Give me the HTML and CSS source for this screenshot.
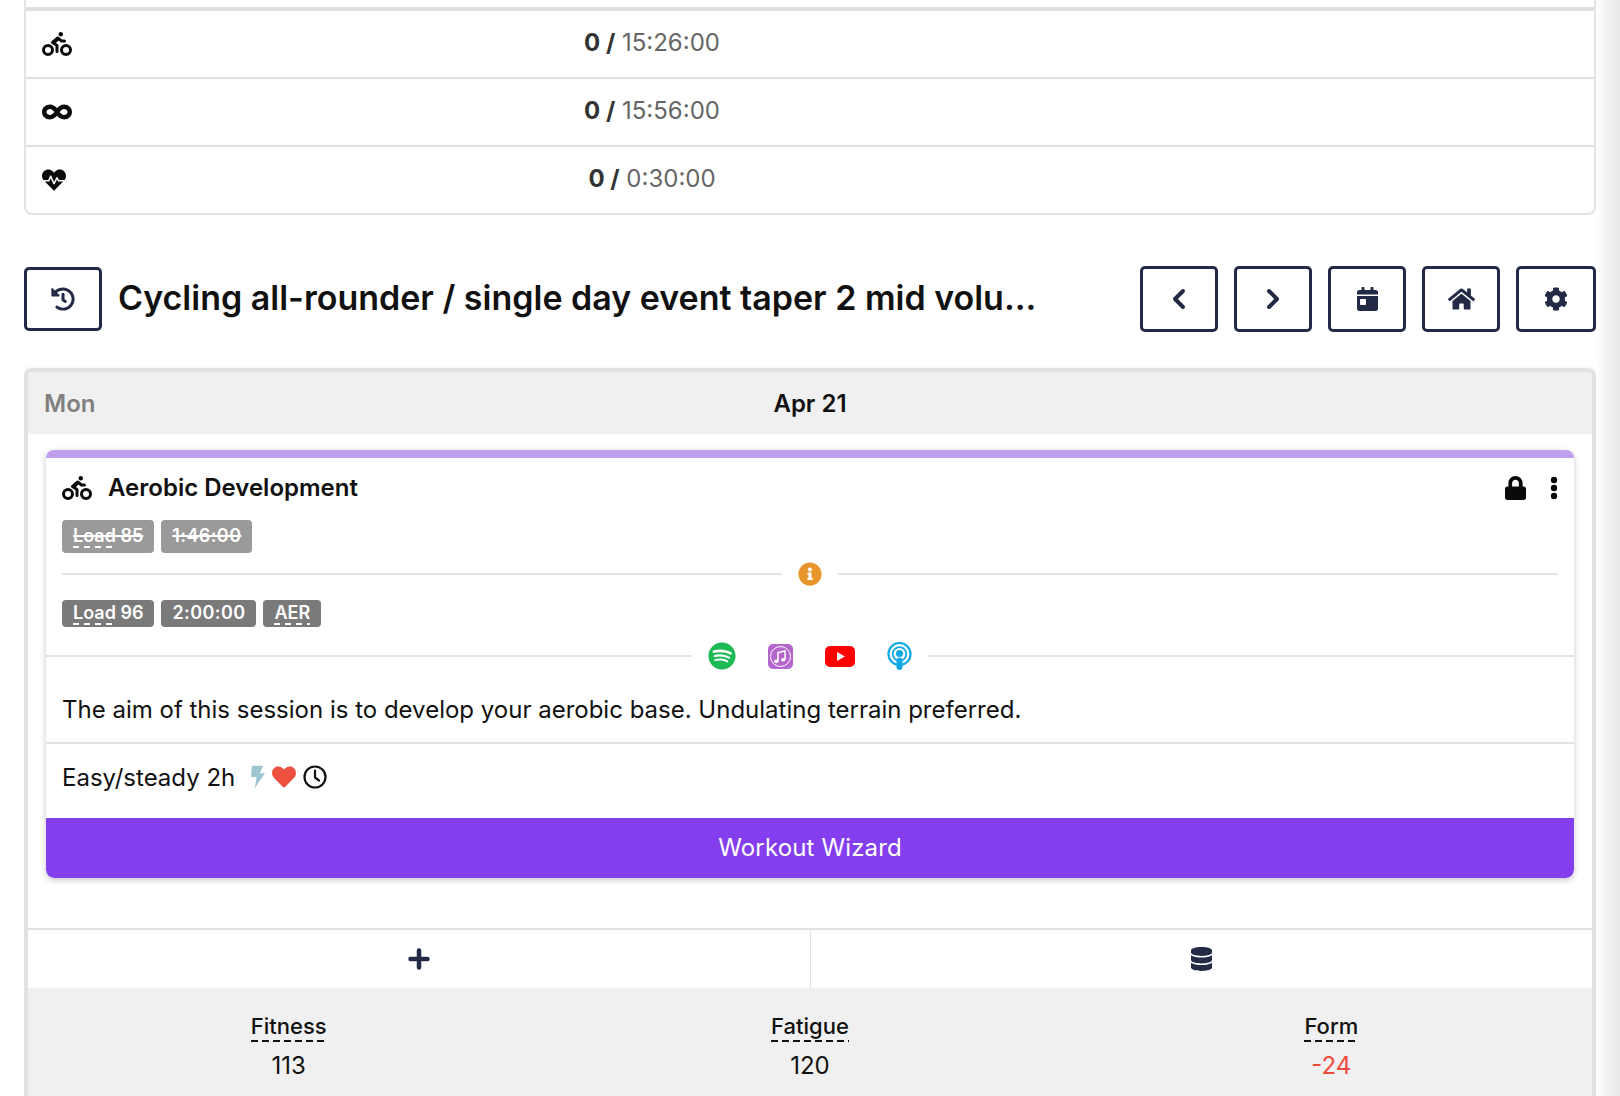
FILE: index.html
```html
<!DOCTYPE html>
<html lang="en">
<head>
<meta charset="utf-8">
<title>Training plan</title>
<link rel="stylesheet" href="styles.css">
</head>
<body>
<div class="page">
<main class="content">
  <section class="summary">
    <div class="summary-row">
      <svg class="ic ic-black" viewBox="0 0 640 512" width="30" height="24"><path d="M400 96a48 48 0 1 0-48-48 48 48 0 0 0 48 48zm-4 121a31.900 31.900 0 0 0 20 7h64a32 32 0 0 0 0-64h-52.780L356 103a31.940 31.940 0 0 0-40.810.680l-112 96a32 32 0 0 0 3.080 50.920L288 305.120V416a32 32 0 0 0 64 0V288a32 32 0 0 0-14.250-26.620l-41.360-27.570 58.250-49.920zm116 39a128 128 0 1 0 128 128 128 128 0 0 0-128-128zm0 192a64 64 0 1 1 64-64 64 64 0 0 1-64 64zM128 256a128 128 0 1 0 128 128 128 128 0 0 0-128-128zm0 192a64 64 0 1 1 64-64 64 64 0 0 1-64 64z"/></svg>
      <div class="summary-val"><b>0 /</b> <span>15:26:00</span></div>
    </div>
    <div class="summary-row">
      <svg class="ic ic-black" viewBox="0 0 640 512" width="30" height="24"><path d="M471.100 96C405 96 353.300 137.300 320 174.600 286.700 137.300 235 96 168.900 96 75.800 96 0 167.800 0 256s75.800 160 168.900 160c66.100 0 117.800-41.300 151.100-78.600 33.300 37.300 85 78.600 151.100 78.600 93.100 0 168.900-71.800 168.900-160S564.200 96 471.100 96zM168.900 320c-40.200 0-72.900-28.700-72.900-64s32.700-64 72.900-64c38.200 0 73.400 36.100 94 64-20.400 27.600-55.900 64-94 64zm302.200 0c-38.200 0-73.400-36.100-94-64 20.400-27.600 55.900-64 94-64 40.200 0 72.900 28.700 72.900 64s-32.700 64-72.900 64z"/></svg>
      <div class="summary-val"><b>0 /</b> <span>15:56:00</span></div>
    </div>
    <div class="summary-row">
      <svg class="ic ic-black" viewBox="0 0 512 512" width="24" height="24"><path d="M320.200 243.800l-49.700 99.400c-6 12.100-23.400 11.700-28.900-.6l-56.900-126.300-30 71.700H60.600l182.500 186.500c7.100 7.300 18.600 7.300 25.700 0L451.400 288H342.300l-22.100-44.200zM473.700 73.900l-2.400-2.500c-51.500-52.600-135.800-52.600-187.400 0L256 100l-27.900-28.500c-51.500-52.700-135.900-52.700-187.400 0l-2.400 2.400C-10.400 123.700-12.500 203 31 256h102.400l35.900-86.200c5.400-12.900 23.600-13.200 29.400-.4l58.200 129.300 49-97.900c5.900-11.800 22.700-11.800 28.600 0l27.600 55.200H481c43.500-53 41.400-132.300-7.300-182.100z"/></svg>
      <div class="summary-val"><b>0 /</b> <span>0:30:00</span></div>
    </div>
  </section>

  <header class="plan-bar">
    <button class="btn btn-history" type="button" aria-label="History">
      <svg class="ic" viewBox="0 0 512 512" width="24" height="24"><path d="M504 255.531c.253 136.640-111.180 248.372-247.820 248.468-59.015.042-113.223-20.530-155.822-54.911-11.077-8.940-11.905-25.541-1.839-35.607l11.267-11.267c8.609-8.609 22.353-9.551 31.891-1.984C173.062 425.135 212.781 440 256 440c101.705 0 184-82.311 184-184 0-101.705-82.311-184-184-184-48.814 0-93.149 18.969-126.068 49.932l50.754 50.754c10.080 10.080 2.941 27.314-11.313 27.314H24c-8.837 0-16-7.163-16-16V38.627c0-14.254 17.234-21.393 27.314-11.314l49.372 49.372C129.209 34.136 189.552 8 256 8c136.810 0 247.747 110.780 248 247.531zm-180.912 78.784l9.823-12.630c8.138-10.463 6.253-25.542-4.210-33.679L288 256.349V152c0-13.255-10.745-24-24-24h-16c-13.255 0-24 10.745-24 24v135.651l65.409 50.874c10.463 8.137 25.541 6.253 33.679-4.210z"/></svg>
    </button>
    <h1 class="plan-title">Cycling all-rounder / single day event taper 2 mid volu...</h1>
    <div class="plan-actions">
      <button class="btn" type="button" aria-label="Previous"><svg class="ic-line" viewBox="0 0 24 24" width="24" height="24"><polyline points="16,4 8,12 16,20"/></svg></button>
      <button class="btn" type="button" aria-label="Next"><svg class="ic-line" viewBox="0 0 24 24" width="24" height="24"><polyline points="8,4 16,12 8,20"/></svg></button>
      <button class="btn" type="button" aria-label="Calendar"><svg class="ic" viewBox="0 0 448 512" width="21" height="24"><path d="M0 464c0 26.500 21.500 48 48 48h352c26.500 0 48-21.500 48-48V192H0v272zm64-192c0-8.800 7.200-16 16-16h96c8.800 0 16 7.200 16 16v96c0 8.800-7.200 16-16 16H80c-8.800 0-16-7.200-16-16v-96zM400 64h-48V16c0-8.800-7.200-16-16-16h-32c-8.800 0-16 7.200-16 16v48H160V16c0-8.800-7.200-16-16-16h-32c-8.800 0-16 7.200-16 16v48H48C21.500 64 0 85.500 0 112v48h448v-48c0-26.500-21.500-48-48-48z"/></svg></button>
      <button class="btn" type="button" aria-label="Home"><svg class="ic" viewBox="0 0 576 512" width="27" height="24"><path d="M280.370 148.260L96 300.110V464a16 16 0 0 0 16 16l112.060-.29a16 16 0 0 0 15.920-16V368a16 16 0 0 1 16-16h64a16 16 0 0 1 16 16v95.640a16 16 0 0 0 16 16.050L464 480a16 16 0 0 0 16-16V300L295.670 148.260a12.190 12.190 0 0 0-15.300 0zM571.600 251.470L488 182.560V44.050a12 12 0 0 0-12-12h-56a12 12 0 0 0-12 12v72.610L318.470 43a48 48 0 0 0-61 0L4.340 251.470a12 12 0 0 0-1.600 16.900l25.500 31A12 12 0 0 0 45.150 301l235.220-193.740a12.190 12.190 0 0 1 15.300 0L530.900 301a12 12 0 0 0 16.900-1.600l25.500-31a12 12 0 0 0-1.700-16.930z"/></svg></button>
      <button class="btn" type="button" aria-label="Settings"><svg class="ic" viewBox="0 0 512 512" width="24" height="24"><path d="M487.400 315.700l-42.600-24.600c4.300-23.200 4.300-47 0-70.200l42.600-24.600c4.900-2.800 7.100-8.600 5.500-14-11.100-35.600-30-67.800-54.700-94.600-3.800-4.100-10-5.100-14.800-2.300L380.800 110c-17.900-15.400-38.500-27.300-60.800-35.100V25.800c0-5.600-3.900-10.500-9.400-11.700-36.700-8.200-74.300-7.800-109.200 0-5.500 1.200-9.400 6.100-9.400 11.700V75c-22.200 7.900-42.800 19.800-60.800 35.100L88.700 85.500c-4.900-2.800-11-1.900-14.800 2.300-24.700 26.700-43.600 58.900-54.700 94.600-1.700 5.400.6 11.200 5.500 14L67.300 221c-4.300 23.200-4.300 47 0 70.200l-42.600 24.600c-4.900 2.800-7.100 8.600-5.500 14 11.100 35.600 30 67.800 54.700 94.600 3.800 4.100 10 5.100 14.800 2.300l42.600-24.600c17.900 15.400 38.500 27.300 60.800 35.100v49.200c0 5.600 3.900 10.500 9.400 11.700 36.700 8.200 74.300 7.800 109.200 0 5.500-1.200 9.400-6.100 9.400-11.700v-49.200c22.200-7.900 42.800-19.800 60.800-35.100l42.600 24.600c4.900 2.800 11 1.900 14.800-2.300 24.700-26.700 43.600-58.900 54.700-94.600 1.500-5.500-.7-11.300-5.600-14.100zM256 336c-44.100 0-80-35.900-80-80s35.900-80 80-80 80 35.900 80 80-35.900 80-80 80z"/></svg></button>
    </div>
  </header>

  <section class="day">
    <div class="day-head">
      <span class="day-name">Mon</span>
      <span class="day-date">Apr 21</span>
    </div>
    <div class="day-body">
      <article class="workout">
        <div class="workout-head">
          <svg class="ic ic-black" viewBox="0 0 640 512" width="30" height="24"><path d="M400 96a48 48 0 1 0-48-48 48 48 0 0 0 48 48zm-4 121a31.900 31.900 0 0 0 20 7h64a32 32 0 0 0 0-64h-52.780L356 103a31.940 31.940 0 0 0-40.810.680l-112 96a32 32 0 0 0 3.080 50.920L288 305.120V416a32 32 0 0 0 64 0V288a32 32 0 0 0-14.250-26.620l-41.360-27.570 58.250-49.920zm116 39a128 128 0 1 0 128 128 128 128 0 0 0-128-128zm0 192a64 64 0 1 1 64-64 64 64 0 0 1-64 64zM128 256a128 128 0 1 0 128 128 128 128 0 0 0-128-128zm0 192a64 64 0 1 1 64-64 64 64 0 0 1-64 64z"/></svg>
          <h2 class="workout-title">Aerobic Development</h2>
          <svg class="ic ic-black lock" viewBox="0 0 448 512" width="21" height="24"><path d="M400 224h-24v-72C376 68.200 307.800 0 224 0S72 68.200 72 152v72H48c-26.500 0-48 21.500-48 48v192c0 26.500 21.500 48 48 48h352c26.500 0 48-21.500 48-48V272c0-26.500-21.500-48-48-48zm-104 0H152v-72c0-39.700 32.300-72 72-72s72 32.300 72 72v72z"/></svg>
          <svg class="ic ic-black kebab" viewBox="0 0 8 24" width="8" height="24"><circle cx="4" cy="4" r="3.200"/><circle cx="4" cy="12" r="3.200"/><circle cx="4" cy="20" r="3.200"/></svg>
        </div>
        <div class="badges badges-old">
          <span class="badge"><s><span class="dashed">Load</span> 85</s></span>
          <span class="badge badge-time"><s>1:46:00</s></span>
        </div>
        <div class="divider divider-inset">
          <svg class="info" viewBox="0 0 512 512" width="24" height="24"><path d="M256 8C119 8 8 119.100 8 256c0 137 111 248 248 248s248-111 248-248C504 119.100 393 8 256 8zm0 110c23.200 0 42 18.800 42 42s-18.800 42-42 42-42-18.800-42-42 18.800-42 42-42zm56 254c0 6.600-5.400 12-12 12h-88c-6.600 0-12-5.400-12-12v-24c0-6.600 5.400-12 12-12h12v-64h-12c-6.600 0-12-5.400-12-12v-24c0-6.600 5.400-12 12-12h64c6.600 0 12 5.400 12 12v100h12c6.600 0 12 5.400 12 12v24z"/></svg>
        </div>
        <div class="badges badges-new">
          <span class="badge"><span class="dashed">Load</span> 96</span>
          <span class="badge badge-time">2:00:00</span>
          <span class="badge"><span class="dashed">AER</span></span>
        </div>
        <div class="divider media">
          <svg class="m-spotify" viewBox="0 0 496 512" width="28" height="28"><path d="M248 8C111.100 8 0 119.100 0 256s111.100 248 248 248 248-111.100 248-248S384.900 8 248 8zm100.700 364.900c-4.200 0-6.800-1.300-10.700-3.600-62.400-37.600-135-39.200-206.700-24.500-3.900 1-9 2.600-11.900 2.600-9.700 0-15.800-7.700-15.800-15.800 0-10.300 6.100-15.200 13.600-16.800 81.900-18.100 165.600-16.500 237 26.200 6.100 3.900 9.700 7.400 9.700 16.500s-7.100 15.400-15.200 15.400zm26.900-65.600c-5.200 0-8.700-2.300-12.300-4.200-62.500-37-155.700-51.900-238.600-29.400-4.800 1.300-7.400 2.600-11.900 2.600-10.700 0-19.400-8.700-19.400-19.400s5.200-17.800 15.500-20.700c27.800-7.800 56.200-13.600 97.800-13.600 64.900 0 127.600 16.100 177 45.500 8.100 4.800 11.300 11 11.300 19.700-.1 10.800-8.500 19.500-19.400 19.500zm31-76.200c-5.200 0-8.400-1.300-12.900-3.900-71.200-42.500-198.500-52.700-280.900-29.700-3.600 1-8.100 2.600-12.900 2.600-13.200 0-23.300-10.300-23.300-23.600 0-13.600 8.400-21.300 17.400-23.900 35.200-10.300 74.600-15.200 117.500-15.200 73 0 149.500 15.200 205.400 47.800 7.800 4.500 12.900 10.700 12.900 22.600 0 13.600-11 23.300-23.200 23.300z"/></svg>
          <svg viewBox="0 0 25 25" width="25" height="25"><rect width="25" height="25" rx="5" fill="#b566cc"/><circle cx="12.500" cy="12.500" r="10" fill="none" stroke="#fff" stroke-width="1"/><path d="M10 17V8.500l7-1.500v8.500" fill="none" stroke="#fff" stroke-width="1.500"/><ellipse cx="8.300" cy="17.200" rx="2.200" ry="1.800" fill="#fff"/><ellipse cx="15.300" cy="15.700" rx="2.200" ry="1.800" fill="#fff"/></svg>
          <svg viewBox="0 0 30 21" width="30" height="21"><rect width="30" height="21" rx="5" fill="#ff0000"/><polygon points="12,6 20,10.500 12,15" fill="#fff"/></svg>
          <svg viewBox="0 0 25 28" width="25" height="28"><g fill="none" stroke="#11a9e3"><circle cx="12.500" cy="12" r="11" stroke-width="2.200"/><circle cx="12.500" cy="12" r="6.800" stroke-width="1.800"/></g><circle cx="12.500" cy="11.500" r="3.600" fill="#11a9e3"/><rect x="9.500" y="15.500" width="6" height="12.500" rx="3" fill="#11a9e3"/></svg>
        </div>
        <p class="workout-desc">The aim of this session is to develop your aerobic base. Undulating terrain preferred.</p>
        <div class="workout-sub">
          <span>Easy/steady 2h</span>
          <span class="sub-icons">
            <svg viewBox="0 0 16 24" width="15" height="24"><polygon points="2,0 14,0 10.500,8 16,8 5,24 7,12 1,12" fill="#9fc6d0"/></svg>
            <svg viewBox="0 0 512 512" width="24" height="24"><path fill="#ee5040" d="M462.300 62.600C407.500 15.900 326 24.300 275.700 76.200L256 96.500l-19.700-20.300C186.100 24.300 104.500 15.900 49.700 62.600c-62.800 53.600-66.100 149.800-9.900 207.900l193.500 199.800c12.500 12.900 32.800 12.900 45.300 0l193.500-199.800c56.300-58.100 53-154.300-9.800-207.900z"/></svg>
            <svg class="clock" viewBox="0 0 24 24" width="24" height="24"><circle cx="12" cy="12" r="10.500"/><polyline points="12,5.500 12,12.500 16,15.500"/></svg>
          </span>
        </div>
        <button class="wizard" type="button">Workout Wizard</button>
      </article>
    </div>
    <div class="day-tools">
      <div class="tool"><svg class="ic-line ic-plus" viewBox="0 0 24 24" width="24" height="24"><path d="M12 3.500v17M3.500 12h17"/></svg></div>
      <div class="tool"><svg class="ic" viewBox="0 0 448 512" width="21" height="24"><path d="M448 73.140v45.720C448 159.100 347.700 192 224 192S0 159.100 0 118.860V73.140C0 32.900 100.300 0 224 0s224 32.900 224 73.140zM448 176v102.900C448 319.100 347.700 352 224 352S0 319.100 0 278.900V176c48.100 33.100 136.200 48.600 224 48.600S399.900 209.100 448 176zm0 160v102.900C448 479.100 347.700 512 224 512S0 479.100 0 438.900V336c48.100 33.100 136.200 48.600 224 48.600S399.900 369.100 448 336z"/></svg></div>
    </div>
    <div class="stats">
      <div class="stat"><span class="stat-label">Fitness</span><span class="stat-val">113</span></div>
      <div class="stat"><span class="stat-label">Fatigue</span><span class="stat-val">120</span></div>
      <div class="stat"><span class="stat-label">Form</span><span class="stat-val stat-neg">-24</span></div>
    </div>
  </section>
</main>
<aside class="edge-shadow"></aside>
</div>
</body>
</html>
```
FILE: styles.css
```css
* { box-sizing: border-box; }
html, body { margin: 0; height: 100%; overflow: hidden; background: #fff; }
body { font-family: Inter, "Liberation Sans", sans-serif; font-size: 24px; color: #111; }
.page { display: flex; height: 1096px; overflow: hidden; }
.content { width: 1596px; padding-left: 24px; flex: none; }
.edge-shadow { flex: 1; background: linear-gradient(90deg, #fff 0%, #f4f4f4 40%, #e6e6e6 100%); }

.ic { fill: #232a45; display: block; }
.ic-black { fill: #0a0a0a; }
.ic-line { fill: none; stroke: #232a45; stroke-width: 4; stroke-linecap: round; stroke-linejoin: round; display: block; }
.ic-plus { stroke-width: 4.500; }

.summary { padding-top: 7px; border: 2px solid #e3e3e3; border-width: 0 2px 2px; border-radius: 0 0 8px 8px; }
.summary-row { display: grid; grid-template-columns: 366px 520px 1fr; align-items: center; height: 68px; border-top: 2px solid #e0e0e0; }
.summary-row:first-child { border-top-width: 4px; height: 70px; }
.summary-row .ic { margin-left: 16px; }
.summary-val { text-align: center; color: #666; grid-column: 2; margin-top: -4px; }
.summary-val b { font-weight: 700; color: #333; }
.summary-val span { font-weight: 400; }

.plan-bar { display: flex; align-items: center; margin-top: 51px; height: 66px; }
.btn { width: 78px; height: 66px; flex: none; display: flex; align-items: center; justify-content: center; background: #fff; border: 3px solid #232a45; border-radius: 5px; padding: 0; }
.btn-history { height: 64px; }
.plan-title { margin: 0 0 2px 16px; font-size: 34px; font-weight: 600; color: #111; flex: 1; white-space: nowrap; line-height: 40px; }
.plan-actions { display: flex; gap: 16px; }
.plan-actions .btn:last-child { width: 80px; }

.day { margin-top: 36px; border: 4px solid #e2e2e2; border-bottom: 0; border-radius: 8px 8px 0 0; box-shadow: 0 -2px 3px rgba(0,0,0,.03); overflow: hidden; }
.day-head { height: 62px; background: #f0f0f0; display: grid; grid-template-columns: 1fr 1fr 1fr; align-items: center; padding: 0 16px; font-weight: 600; }
.day-name { color: #808080; }
.day-date { text-align: center; color: #111; }
.day-body { padding: 16px 18px 50px 18px; }

.workout { border-top: 8px solid #c09fef; border-radius: 8px; box-shadow: 0 2px 6px rgba(0,0,0,.22); display: flex; flex-direction: column; overflow: hidden; }
.workout-head { display: flex; align-items: center; gap: 16px; height: 62px; padding: 0 16px 3px; }
.workout-title { margin: 0; font-size: 24px; font-weight: 600; flex: 1; }
.workout-head .kebab { margin-left: 8px; }

.badges { display: flex; gap: 7px; padding: 0 16px; }
.badge { display: block; background: #7a7a7a; color: #fff; font-size: 18px; font-weight: 600; border-radius: 4px; padding: 0 11px; height: 27px; line-height: 26px; white-space: nowrap; overflow: hidden; }
.badge-time { letter-spacing: .4px; }
.badges-old .badge { background: #9a9a9a; height: 33px; line-height: 32px; }
.badges-old s { text-decoration-thickness: 2px; }
.dashed { padding-bottom: 2px; background: repeating-linear-gradient(90deg, #fff 0 6px, transparent 6px 11px) left bottom / 100% 2px no-repeat; }

.divider { display: flex; align-items: center; justify-content: center; }
.divider::before, .divider::after { content: ""; flex: 1; height: 2px; background: #e3e3e3; }
.divider-inset { margin: 0 16px 5px; height: 42px; gap: 16px; }
.info { fill: #e8962b; display: block; }
.media { height: 30px; gap: 32px; margin-top: 14px; }
.media::before { margin-right: -16px; }
.media::after { margin-left: -16px; }
.media svg { display: block; }
.m-spotify { fill: #1db954; }

.workout-desc { margin: 0; height: 73px; padding: 6px 16px 0; display: flex; align-items: center; border-bottom: 2px solid #e3e3e3; }
.workout-sub { height: 74px; padding: 0 16px 8px; display: flex; align-items: center; gap: 15px; }
.sub-icons { display: flex; align-items: center; gap: 7px; }
.sub-icons svg { display: block; }
.clock { fill: none; stroke: #111; stroke-width: 2.200; stroke-linecap: round; stroke-linejoin: round; }
.wizard { height: 60px; padding: 0 0 2px; border: 0; background: #843eee; color: #fff; font: 400 24px Inter, "Liberation Sans", sans-serif; letter-spacing: .14px; width: 100%; border-radius: 0 0 8px 8px; }

.day-tools { display: grid; grid-template-columns: 1fr 1fr; height: 60px; border-top: 2px solid #e3e3e3; }
.tool { display: flex; align-items: center; justify-content: center; }
.tool + .tool { border-left: 1px solid #e3e3e3; }
.stats { display: grid; grid-template-columns: 1fr 1fr 1fr; background: #f0f0f0; height: 109px; padding-top: 24px; text-align: center; }
.stat { display: flex; flex-direction: column; align-items: center; }
.stat-label { font-weight: 500; font-size: 22px; line-height: 28px; background: repeating-linear-gradient(90deg, #111 0 7px, transparent 7px 11px) left bottom / 100% 2px no-repeat; padding-bottom: 2px; }
.stat-val { margin-top: 9px; line-height: 30px; font-size: 24px; }
.stat-neg { color: #ee4c3e; }
```
